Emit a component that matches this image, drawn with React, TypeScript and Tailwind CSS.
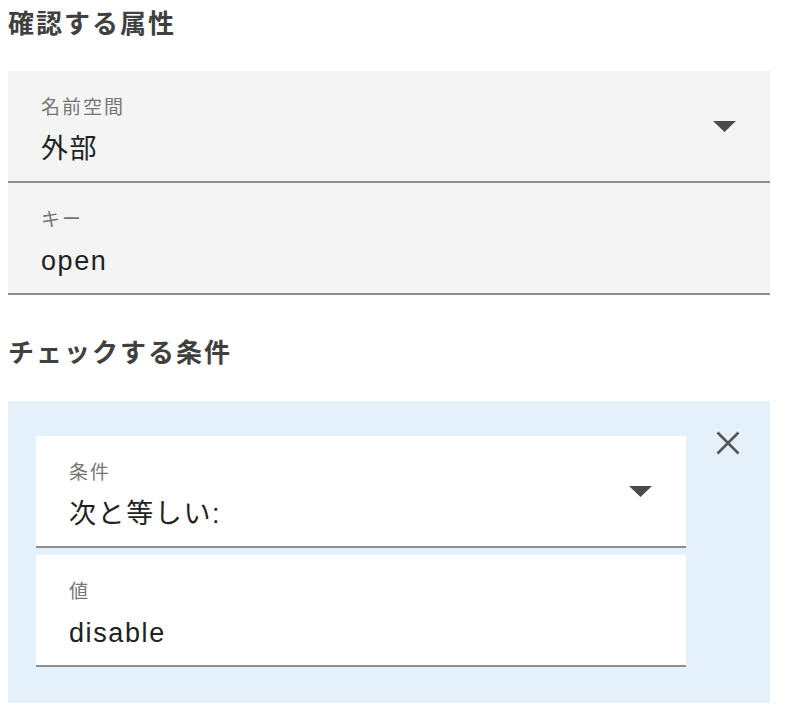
const font = { fontFamily: '"Liberation Sans", "Noto Sans CJK JP", sans-serif' };

function Caret() {
  return (
    <svg width="23" height="11" viewBox="0 0 23 11" className="shrink-0">
      <polygon points="0,0 23,0 11.5,11" fill="#4a4a4a" />
    </svg>
  );
}

function Close() {
  return (
    <svg width="24" height="24" viewBox="0 0 24 24" fill="none" stroke="#555" strokeWidth="2.6">
      <path d="M1.5 1.5l21 21M22.5 1.5l-21 21" />
    </svg>
  );
}

function Field({ label, value, select, bg }: { label: string; value: string; select?: boolean; bg: string }) {
  return (
    <div className={`${bg} h-[112px] border-b-2 border-[#8e8e8e] flex items-center pl-[33px] pr-[34px]`}>
      <div className="flex-1 flex flex-col pt-[25px] pb-[14px] h-full">
        <div className="text-[19px] leading-[24px] tracking-[2px] text-[#757575]">{label}</div>
        <div className="mt-[11px] text-[27px] leading-[36px] tracking-[1.6px] text-[#222]">{value}</div>
      </div>
      {select && <Caret />}
    </div>
  );
}

export default function App() {
  return (
    <div className="w-[788px] h-[712px] bg-white pt-[6px] px-[8px] pr-[18px]" style={font}>
      <h2 className="text-[26px] leading-[36px] font-bold tracking-[2px] text-[#404040]">確認する属性</h2>
      <div className="mt-[29px]">
        <Field bg="bg-[#f4f4f4]" label="名前空間" value="外部" select />
        <Field bg="bg-[#f4f4f4]" label="キー" value="open" />
      </div>

      <h2 className="mt-[40px] text-[26px] leading-[36px] font-bold tracking-[2px] text-[#404040]">チェックする条件</h2>
      <div className="mt-[30px] bg-[#e4f1fb] flex pt-[30px] pl-[28px] pb-[36px]">
        <div className="flex-1 flex flex-col gap-[7px] mt-[5px]">
          <Field bg="bg-white" label="条件" value="次と等しい:" select />
          <Field bg="bg-white" label="値" value="disable" />
        </div>
        <div className="w-[84px] flex justify-center items-start">
          <Close />
        </div>
      </div>
    </div>
  );
}
